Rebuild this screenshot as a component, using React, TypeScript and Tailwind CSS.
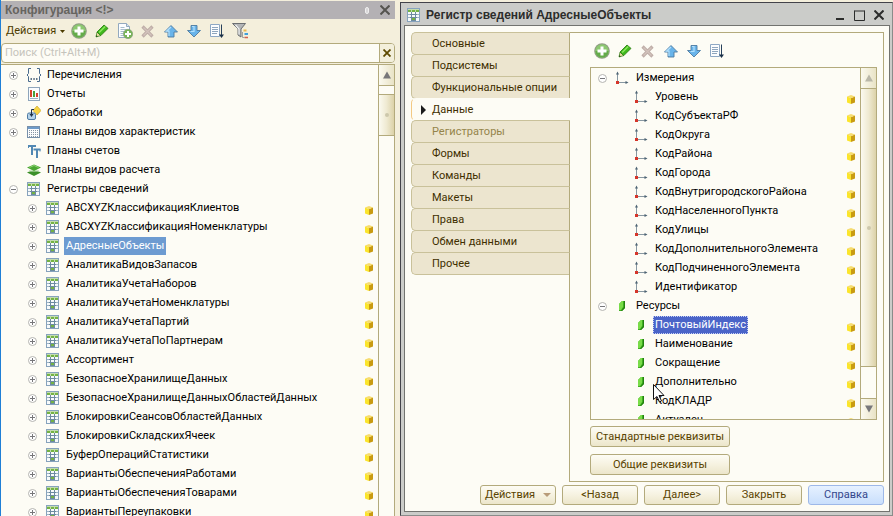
// Configurator workspace: the metadata tree on the left and the
// information register editor window on the right.
import type { ReactNode } from 'react'

type IconProps = { className?: string }

type TreeItem = {
  name: string
  icon: (p: IconProps) => ReactNode
  level: 0 | 1
  expander?: 'plus' | 'minus'
  locked?: boolean
  selected?: boolean
}

/* ---------- icons ---------- */

function AddIcon() {
  return (
    <svg viewBox="0 0 16 16" className="h-4 w-4">
      <circle cx="8" cy="8" r="7.8" fill="#8f9a84" />
      <circle cx="8" cy="8" r="6.8" fill="#8cc870" />
      <path d="M1.4 8a6.600 6.600 0 0 0 13.200 0z" fill="#64ab4a" />
      <path d="M6.500 3.500h3v3h3v3h-3v3h-3v-3h-3v-3h3z" fill="#fff" />
    </svg>
  )
}

function PencilIcon() {
  return (
    <svg viewBox="0 0 16 16" className="h-4 w-4">
      <path d="M2 14l1-5 3.8 3.6z" fill="#e9d9a0" stroke="#2c7a12" strokeWidth=".7" />
      <path d="M3 9l7-7 4 3.4-7.2 7.2z" fill="#3fb81c" stroke="#25780d" strokeWidth=".8" />
      <path d="M5.2 9.6l6-6" stroke="#8fe860" strokeWidth="1.4" />
      <path d="M2 14l.4-2 1.4 1.4z" fill="#1c4d0b" />
    </svg>
  )
}

function AddCopyIcon() {
  return (
    <svg viewBox="0 0 16 16" className="h-4 w-4">
      <path d="M1.5.5h8l3 3v11h-11z" fill="#fbfdff" stroke="#93a9bf" />
      <path d="M9.5.5v3h3" fill="#d4e2ee" stroke="#93a9bf" />
      <path d="M3.5 4.5h4M3.5 6.5h6M3.5 8.5h4M3.5 10.5h3M3.5 12.5h3" stroke="#a8bccd" />
      <circle cx="11" cy="11" r="4.7" fill="#78b558" stroke="#82987a" strokeWidth=".6" />
      <path d="M10 8h2v2h2v2h-2v2h-2v-2H8v-2h2z" fill="#fff" />
    </svg>
  )
}

function DeleteIcon() {
  return (
    <svg viewBox="0 0 16 16" className="h-4 w-4">
      <path d="M2.5 3.5l10 10M12.5 3.5l-10 10" stroke="#bfaea8" strokeWidth="3.2" />
      <path d="M3.5 4.5l8 8M11.5 4.5l-8 8" stroke="#d3c3bc" strokeWidth="1.2" />
    </svg>
  )
}

function ArrowIcon({ down }: { down?: boolean }) {
  return (
    <svg viewBox="0 0 16 16" className="h-4 w-4">
      <path
        d={down ? 'M5 2.5h6v5h3.5L8 14 1.5 7.5H5z' : 'M5 14h6V9h3.5L8 2.5 1.5 9H5z'}
        fill="#69b4ea"
        stroke="#4d7aa0"
        strokeWidth=".9"
      />
      <path
        d={down ? 'M6 3.5h2v5H4.5' : 'M8 4l-4.500 4.200H6V13'}
        fill="none"
        stroke="#b4e0fb"
        strokeWidth="1.2"
      />
    </svg>
  )
}

function SortIcon() {
  return (
    <svg viewBox="0 0 16 16" className="h-4 w-4">
      <path d="M1.5 1.5h9v12h-9z" fill="#fcfdfe" stroke="#8ea8c4" />
      <path d="M3 4.5h6M3 6.5h6M3 8.5h6M3 10.5h5" stroke="#8fa6be" />
      <path d="M12.5 1.5v11" stroke="#27405a" />
      <path d="M10 11.500h5l-2.500 3.500z" fill="#1b3048" />
    </svg>
  )
}

function FilterIcon() {
  return (
    <svg viewBox="0 0 16 16" className="h-4 w-4">
      <path d="M.5.5h13L9 6v8l-3-2V6z" fill="#b3b5b7" stroke="#6c6f72" />
      <path d="M3.5 2L7 6v5.500" stroke="#f2f3f3" fill="none" strokeWidth="1.2" />
      <path d="M11.5 7.5h3" stroke="#e9b950" strokeWidth="2" />
      <path d="M12.5 11h3.5" stroke="#40a0dc" strokeWidth="2" />
      <path d="M12.5 14.5h3.5" stroke="#d8604a" strokeWidth="1.5" />
      <path d="M10.5 9v5.500h2" stroke="#8a8d8f" fill="none" strokeWidth=".8" />
    </svg>
  )
}

function EnumIcon({ className }: IconProps) {
  return (
    <svg viewBox="0 0 14 14" className={className} fill="none" stroke="#4a6c8e">
      <path d="M4 .5H1.5v5L0 7l1.5 1.5v5H4M10 .5h2.5v5L14 7l-1.5 1.5v5H10" />
      <path d="M3.5 11h1.5M6.3 11h1.5M9 11h1.5" stroke="#2f4a66" strokeWidth="1.5" />
    </svg>
  )
}

function ReportIcon({ className }: IconProps) {
  return (
    <svg viewBox="0 0 14 14" className={className} shapeRendering="crispEdges">
      <path d="M1.5.5h11v13h-11z" fill="#fafcfe" stroke="#8ea5bb" />
      <path d="M3 3h2v7H3zM9 6h2v4H9z" fill="#d8412c" />
      <path d="M6 4h2v6H6z" fill="#4aa03c" />
      <path d="M3 11.5h8" stroke="#9db1c4" />
    </svg>
  )
}

function ProcessingIcon({ className }: IconProps) {
  return (
    <svg viewBox="0 0 14 14" className={className}>
      <path d="M10 0l4 4.5L10 9 6 4.5z" fill="#f7d544" stroke="#c29a22" strokeWidth=".6" />
      <rect x=".5" y="7" width="8" height="6.5" rx="1.5" fill="#b5d3ea" stroke="#4f7ba3" />
      <path d="M7 3.5H4.5V9" fill="none" stroke="#1f3045" />
      <path d="M2.5 8h4l-2 3z" fill="#1f3045" />
    </svg>
  )
}

function CharacteristicsIcon({ className }: IconProps) {
  return (
    <svg viewBox="0 0 14 14" className={className} shapeRendering="crispEdges">
      <path d="M.5 1.5h12v11H.5z" fill="#fbfcfd" stroke="#7790aa" />
      <path d="M1 2h11v2H1z" fill="#6f9cca" />
      <path d="M2 5.5h9M2 7.5h9M2 9.5h9M2 11.5h9" stroke="#8795a3" strokeDasharray="1 1" />
    </svg>
  )
}

function AccountsIcon({ className }: IconProps) {
  return (
    <svg viewBox="0 0 14 14" className={className} fill="none" stroke="#5288b3" strokeWidth="2">
      <path d="M1 2h8M5 2v9M6.5 5.5H13.5M10 5.5V14" />
      <path d="M1.5 1v3M13 5v2.5" strokeWidth="1" />
    </svg>
  )
}

function CalculationIcon({ className }: IconProps) {
  return (
    <svg viewBox="0 0 14 14" className={className}>
      <path d="M0 9.5L7 6.5l7 3-7 3.5z" fill="#3b8f28" />
      <path d="M2 7h10v1.5H2z" fill="#cfe6c4" />
      <path d="M0 4.5L7 1.5l7 3L7 8z" fill="#4aa632" />
      <path d="M2.5 4.5L7 2.5l4.5 2" fill="none" stroke="#8fd476" />
    </svg>
  )
}

function RegisterIcon({ className }: IconProps) {
  return (
    <svg viewBox="0 0 14 14" className={className} shapeRendering="crispEdges">
      <path d="M.5.5h12v13H.5z" fill="#f7fafb" stroke="#87a3bd" />
      <path d="M1 1h11v3H1z" fill="#c3dcae" />
      <path d="M1 2h3v2H1zM5 2h3v2H5zM9 2h3v2H9z" fill="#74b344" />
      <path d="M1 6.5h11M1 9.5h11" stroke="#9fb4c5" />
      <path d="M4.5 4v9M8.5 4v9" stroke="#6d8ba0" />
      <path d="M3 6h7v1H3zM3 9h7v1H3zM5 12h3v1H5z" fill="#6d8ba0" />
      <path d="M5 10h3v2H5z" fill="#74b344" />
    </svg>
  )
}

function AxisIcon({ className }: IconProps) {
  return (
    <svg viewBox="0 0 14 14" className={className}>
      <path d="M1.5 2v9.5H10" fill="none" stroke="#8797a1" />
      <path d="M0 3.5L1.5.5 3 3.5zM9.500 10l3 1.500-3 1.500z" fill="#4d6373" />
      <rect x="0" y="10" width="3" height="3" fill="#d5352a" />
    </svg>
  )
}

function ResourceIcon({ className }: IconProps) {
  return (
    <svg viewBox="0 0 14 14" className={className}>
      <path d="M3 5l3-3h3v7l-3 3H3z" fill="#3fae22" />
      <path d="M3 5l3-3h1v6l-2 3H3z" fill="#79dc48" />
      <path d="M8 2h1v7l-3 3H5l3-4z" fill="#23800f" />
    </svg>
  )
}

function LockCube() {
  return (
    <svg viewBox="0 0 9 9" className="h-[9px] w-[9px] shrink-0" aria-label="На замке">
      <path d="M0 1.5l4 1.5v6L0 7.5z" fill="#fbe52c" />
      <path d="M4 3l4-1.5v6L4 9z" fill="#c99b12" />
      <path d="M0 1.5L4 0l4 1.5L4 3.3z" fill="#f6dc70" />
    </svg>
  )
}

function Expander({ kind }: { kind: 'plus' | 'minus' }) {
  return (
    <button type="button" aria-label={kind === 'plus' ? 'Развернуть' : 'Свернуть'} className="h-[9px] w-[9px]">
      <svg viewBox="0 0 9 9" className="h-[9px] w-[9px]" fill="none">
        <circle cx="4.5" cy="4.5" r="4" fill="#fff" stroke="#b4b4b0" />
        <path d={kind === 'plus' ? 'M2 4.5h5M4.5 2v5' : 'M2 4.5h5'} stroke="#77777a" />
      </svg>
    </button>
  )
}

/* ---------- data ---------- */

const register = (name: string, selected = false): TreeItem => ({
  name,
  icon: RegisterIcon,
  level: 1,
  expander: 'plus',
  locked: true,
  selected,
})

const METADATA: TreeItem[] = [
  { name: 'Перечисления', icon: EnumIcon, level: 0, expander: 'plus' },
  { name: 'Отчеты', icon: ReportIcon, level: 0, expander: 'plus' },
  { name: 'Обработки', icon: ProcessingIcon, level: 0, expander: 'plus' },
  { name: 'Планы видов характеристик', icon: CharacteristicsIcon, level: 0, expander: 'plus' },
  { name: 'Планы счетов', icon: AccountsIcon, level: 0 },
  { name: 'Планы видов расчета', icon: CalculationIcon, level: 0 },
  { name: 'Регистры сведений', icon: RegisterIcon, level: 0, expander: 'minus' },
  register('ABCXYZКлассификацияКлиентов'),
  register('ABCXYZКлассификацияНоменклатуры'),
  register('АдресныеОбъекты', true),
  register('АналитикаВидовЗапасов'),
  register('АналитикаУчетаНаборов'),
  register('АналитикаУчетаНоменклатуры'),
  register('АналитикаУчетаПартий'),
  register('АналитикаУчетаПоПартнерам'),
  register('Ассортимент'),
  register('БезопасноеХранилищеДанных'),
  register('БезопасноеХранилищеДанныхОбластейДанных'),
  register('БлокировкиСеансовОбластейДанных'),
  register('БлокировкиСкладскихЯчеек'),
  register('БуферОперацийСтатистики'),
  register('ВариантыОбеспеченияРаботами'),
  register('ВариантыОбеспеченияТоварами'),
  register('ВариантыПереупаковки'),
]

const dimension = (name: string): TreeItem => ({ name, icon: AxisIcon, level: 1, locked: true })
const resource = (name: string, selected = false): TreeItem => ({
  name,
  icon: ResourceIcon,
  level: 1,
  locked: true,
  selected,
})

const FIELDS: TreeItem[] = [
  { name: 'Измерения', icon: AxisIcon, level: 0, expander: 'minus' },
  dimension('Уровень'),
  dimension('КодСубъектаРФ'),
  dimension('КодОкруга'),
  dimension('КодРайона'),
  dimension('КодГорода'),
  dimension('КодВнутригородскогоРайона'),
  dimension('КодНаселенногоПункта'),
  dimension('КодУлицы'),
  dimension('КодДополнительногоЭлемента'),
  dimension('КодПодчиненногоЭлемента'),
  dimension('Идентификатор'),
  { name: 'Ресурсы', icon: ResourceIcon, level: 0, expander: 'minus' },
  resource('ПочтовыйИндекс', true),
  resource('Наименование'),
  resource('Сокращение'),
  resource('Дополнительно'),
  resource('КодКЛАДР'),
  resource('Актуален'),
]

const TABS = [
  'Основные',
  'Подсистемы',
  'Функциональные опции',
  'Данные',
  'Регистраторы',
  'Формы',
  'Команды',
  'Макеты',
  'Права',
  'Обмен данными',
  'Прочее',
]

/* ---------- building blocks ---------- */

function ToolButton({ label, children }: { label: string; children: ReactNode }) {
  return (
    <button type="button" aria-label={label} className="flex h-5 w-[23px] items-center justify-center">
      {children}
    </button>
  )
}

function Tree({ items, label, selection }: { items: TreeItem[]; label: string; selection: string }) {
  return (
    <ul role="tree" aria-label={label} className="min-w-0 flex-1 overflow-hidden">
      {items.map(({ name, icon: Icon, level, expander, locked, selected }) => (
        <li
          key={name}
          role="treeitem"
          aria-selected={!!selected}
          className={`flex h-[19px] items-center pt-px pr-1 ${level === 1 ? 'pl-[26px]' : 'pl-[7px]'}`}
        >
          <span className="flex w-[18px] shrink-0 items-center pt-px">{expander && <Expander kind={expander} />}</span>
          <Icon className="h-[14px] w-[14px] shrink-0" />
          <span className={`ml-1 px-[2px] leading-[18px] whitespace-nowrap ${selected ? selection : ''}`}>{name}</span>
          {locked && (
            <span className="ml-auto pt-[5px]">
              <LockCube />
            </span>
          )}
        </li>
      ))}
    </ul>
  )
}

const THUMB = 'bg-linear-to-r from-[#fbfaf0] via-[#efead2] to-[#dcd2a8]'

function ScrollArrow({ down, dim }: { down?: boolean; dim?: boolean }) {
  return (
    <button
      type="button"
      aria-label={down ? 'Вниз' : 'Вверх'}
      className="flex h-5 w-full shrink-0 items-center justify-center bg-linear-to-r from-[#fbfaf0] to-[#e9e3c6]"
    >
      <svg viewBox="0 0 8 8" className="h-2 w-2">
        <path d={down ? 'M0 .5h8L4 7.5z' : 'M0 7.5h8L4 .5z'} fill={dim ? '#b9b7a8' : '#77777a'} />
      </svg>
    </button>
  )
}

function Grip() {
  return <span className="h-1 w-1 rounded-full bg-[#cdc8ac]" />
}

const BUTTON =
  'flex items-center justify-center rounded-[3px] border border-[#b3aa7c] bg-linear-to-b from-[#fdfcf5] via-[#f6f2e0] to-[#ece6cb] text-[#594300] whitespace-nowrap'

function FooterButton({ children }: { children: ReactNode }) {
  return (
    <button type="button" className={`${BUTTON} h-5 w-[76px]`}>
      {children}
    </button>
  )
}

/* ---------- panels ---------- */

function ConfigurationPanel() {
  return (
    <aside className="flex w-[395px] shrink-0 flex-col border-l border-[#1f7fd6] pt-px">
      <header className="flex h-[18px] shrink-0 items-center bg-[#b4b1b4] pr-1 pl-1 text-[#66645f]">
        <h1 className="font-['Liberation_Sans',sans-serif] text-[12px] font-bold">Конфигурация &lt;!&gt;</h1>
        <span className="ml-auto mr-[10px] h-[7px] w-1 rounded-sm border border-[#efefef] bg-[#d8d6d8]" />
        <button type="button" aria-label="Закрыть панель" className="p-px text-[#55544f]">
          <svg viewBox="0 0 10 10" className="h-[10px] w-[10px]" stroke="currentColor" strokeWidth="2">
            <path d="M.5.5l9 9M9.5.5l-9 9" />
          </svg>
        </button>
      </header>

      <div className="flex h-6 shrink-0 items-center">
        <button type="button" className="flex w-[66px] items-center gap-1 pl-[5px] text-[#4c3b00]">
          Действия
          <svg viewBox="0 0 5 3" className="h-[3px] w-[5px] shrink-0">
            <path d="M0 0h5L2.5 3z" fill="currentColor" />
          </svg>
        </button>
        <ToolButton label="Добавить"><AddIcon /></ToolButton>
        <ToolButton label="Изменить"><PencilIcon /></ToolButton>
        <ToolButton label="Добавить копированием"><AddCopyIcon /></ToolButton>
        <ToolButton label="Удалить"><DeleteIcon /></ToolButton>
        <ToolButton label="Переместить вверх"><ArrowIcon /></ToolButton>
        <ToolButton label="Переместить вниз"><ArrowIcon down /></ToolButton>
        <ToolButton label="Упорядочить"><SortIcon /></ToolButton>
        <ToolButton label="Отбор"><FilterIcon /></ToolButton>
      </div>

      <div className="flex h-5 shrink-0 overflow-hidden rounded-[4px] border border-[#b3aa7c] bg-[#fdfcf5]">
        <input
          type="search"
          aria-label="Поиск"
          placeholder="Поиск (Ctrl+Alt+M)"
          className="min-w-0 flex-1 bg-transparent px-[3px] outline-none placeholder:text-[#c6c4bc]"
        />
        <button
          type="button"
          aria-label="Очистить"
          className="flex w-[15px] items-center justify-center border-l border-[#b3aa7c] bg-[#f3efdb] text-[#5e4a00]"
        >
          <svg viewBox="0 0 8 8" className="h-2 w-2" stroke="currentColor" strokeWidth="1.8">
            <path d="M.5.5l7 7M7.5.5l-7 7" />
          </svg>
        </button>
      </div>

      <div className="mt-px flex min-h-0 flex-1 border-t border-r border-[#b3aa7c] bg-[#fdfcf5] pl-px">
        <Tree items={METADATA} label="Конфигурация" selection="bg-[#6d9bd1] text-white" />
        <div className="flex w-4 shrink-0 flex-col border-l border-[#b3aa7c]">
          <ScrollArrow />
          <div className="h-[10px] shrink-0 border-y border-[#b3aa7c]" />
          <div className={`flex h-[41px] shrink-0 items-center justify-center border-b border-[#b3aa7c] ${THUMB}`}>
            <Grip />
          </div>
        </div>
      </div>
    </aside>
  )
}

function TabStrip() {
  return (
    <nav role="tablist" aria-label="Разделы" className="flex w-[159px] shrink-0 flex-col">
      {TABS.map((tab) => {
        const active = tab === 'Данные'
        const look = active
          ? 'border-r-transparent border-l-[#f3c983] border-y-transparent bg-[#fdfcf5] text-[#3f2f00]'
          : tab === 'Регистраторы'
            ? 'border-[#c9c19a] border-r-[#b3aa7c] bg-[#ece5cf] text-[#94844a]'
            : 'border-[#c9c19a] border-r-[#b3aa7c] bg-[#ece5cf] text-[#3f2f00]'
        return (
          <button
            key={tab}
            type="button"
            role="tab"
            aria-selected={active}
            className={`-mb-px flex h-[23px] shrink-0 items-center rounded-l-[5px] border text-left ${look}`}
          >
            <span className="flex w-5 pl-[9px]">
              {active && (
                <svg viewBox="0 0 5 10" className="h-[10px] w-[5px]">
                  <path d="M0 0l5 5-5 5z" fill="#1c1c1c" />
                </svg>
              )}
            </span>
            {tab}
          </button>
        )
      })}
      <div className="flex-1 border-r border-[#b3aa7c]" />
    </nav>
  )
}

function FieldTree() {
  return (
    <div className="relative flex min-h-0 flex-1 border border-[#b3aa7c]">
      <Tree
        items={FIELDS}
        label="Данные"
        selection="bg-[#4a64c8] text-white outline-1 -outline-offset-1 outline-dotted outline-[#c5cff5]"
      />
      <div className="flex w-4 shrink-0 flex-col border-l border-[#b3aa7c]">
        <ScrollArrow dim />
        <div className={`flex flex-1 items-center justify-center border-y border-[#b3aa7c] ${THUMB}`}>
          <Grip />
        </div>
        <div className="h-8 shrink-0 border-b border-[#b3aa7c]" />
        <ScrollArrow down />
      </div>
      <svg viewBox="0 0 12 19" className="absolute top-[316px] left-[62px] h-[19px] w-3">
        <path d="M.5.5v15l3.5-3 2.500 5.500 2-1-2.500-5.500H11z" fill="#fff" stroke="#111" />
      </svg>
    </div>
  )
}

function RegisterWindow() {
  return (
    <main className="mt-[2px] ml-[5px] flex min-w-0 flex-1 flex-col border border-r-[#8a8c8a] border-b-[#8a8c8a] border-t-[#43434a] border-l-[#43434a] bg-[#cbccc9] pr-[2px] pb-[3px] pl-[3px]">
      <header className="flex h-[22px] shrink-0 items-center pt-[2px] pr-[6px] pl-[3px] text-[#2c2d2c]">
        <RegisterIcon className="h-[14px] w-[14px] shrink-0" />
        <h2 className="ml-[5px] font-['Liberation_Sans',sans-serif] text-[12px] font-bold whitespace-nowrap">
          Регистр сведений АдресныеОбъекты
        </h2>
        <div className="ml-auto flex items-center gap-[9px]">
          <button type="button" aria-label="Свернуть окно">
            <svg viewBox="0 0 10 10" className="h-[10px] w-[10px]"><path d="M1 8h8v2H1z" fill="currentColor" /></svg>
          </button>
          <button type="button" aria-label="Развернуть окно">
            <svg viewBox="0 0 11 11" className="h-[11px] w-[11px]" fill="none" stroke="currentColor">
              <path d="M.5 1h10M.5.5v10h10V.5" />
            </svg>
          </button>
          <button type="button" aria-label="Закрыть окно">
            <svg viewBox="0 0 10 10" className="h-[10px] w-[10px]" stroke="currentColor" strokeWidth="2">
              <path d="M.5.5l9 9M9.5.5l-9 9" />
            </svg>
          </button>
        </div>
      </header>

      <div className="flex min-h-0 flex-1 flex-col border border-[#72736f] bg-[#fdfcf5] pt-[6px] pr-[5px] pb-[6px] pl-[6px]">
        <div className="flex min-h-0 flex-1">
          <TabStrip />
          <section
            role="tabpanel"
            aria-label="Данные"
            className="flex min-w-0 flex-1 flex-col border-y border-r border-[#b3aa7c] pr-[6px] pb-[6px] pl-5"
          >
            <div className="flex h-[34px] shrink-0 items-center pt-px">
              <ToolButton label="Добавить"><AddIcon /></ToolButton>
              <ToolButton label="Изменить"><PencilIcon /></ToolButton>
              <ToolButton label="Удалить"><DeleteIcon /></ToolButton>
              <ToolButton label="Переместить вверх"><ArrowIcon /></ToolButton>
              <ToolButton label="Переместить вниз"><ArrowIcon down /></ToolButton>
              <ToolButton label="Упорядочить"><SortIcon /></ToolButton>
            </div>
            <FieldTree />
            <div className="mt-[6px] flex shrink-0 flex-col gap-[7px]">
              <button type="button" className={`${BUTTON} h-[21px] w-[140px]`}>Стандартные реквизиты</button>
              <button type="button" className={`${BUTTON} h-[21px] w-[140px]`}>Общие реквизиты</button>
            </div>
          </section>
        </div>

        <footer className="mt-[3px] flex shrink-0 justify-end gap-[6px]">
          <button type="button" className={`${BUTTON} h-5 w-[76px] gap-2`}>
            Действия
            <svg viewBox="0 0 8 4" className="h-1 w-2 shrink-0"><path d="M0 0h8L4 4z" fill="#b89b78" /></svg>
          </button>
          <FooterButton>&lt;Назад</FooterButton>
          <FooterButton>Далее&gt;</FooterButton>
          <FooterButton>Закрыть</FooterButton>
          <button
            type="button"
            className="flex h-5 w-[76px] items-center justify-center rounded-[3px] border border-[#9db8e8] bg-linear-to-b from-[#e6f1ff] to-[#c9dffc] text-[#33468c]"
          >
            Справка
          </button>
        </footer>
      </div>
    </main>
  )
}

export default function App() {
  return (
    <div className="flex h-screen overflow-hidden bg-[#f4efdc] font-['Roboto','Liberation_Sans',sans-serif] text-[11px] leading-4 text-black">
      <ConfigurationPanel />
      <RegisterWindow />
    </div>
  )
}
